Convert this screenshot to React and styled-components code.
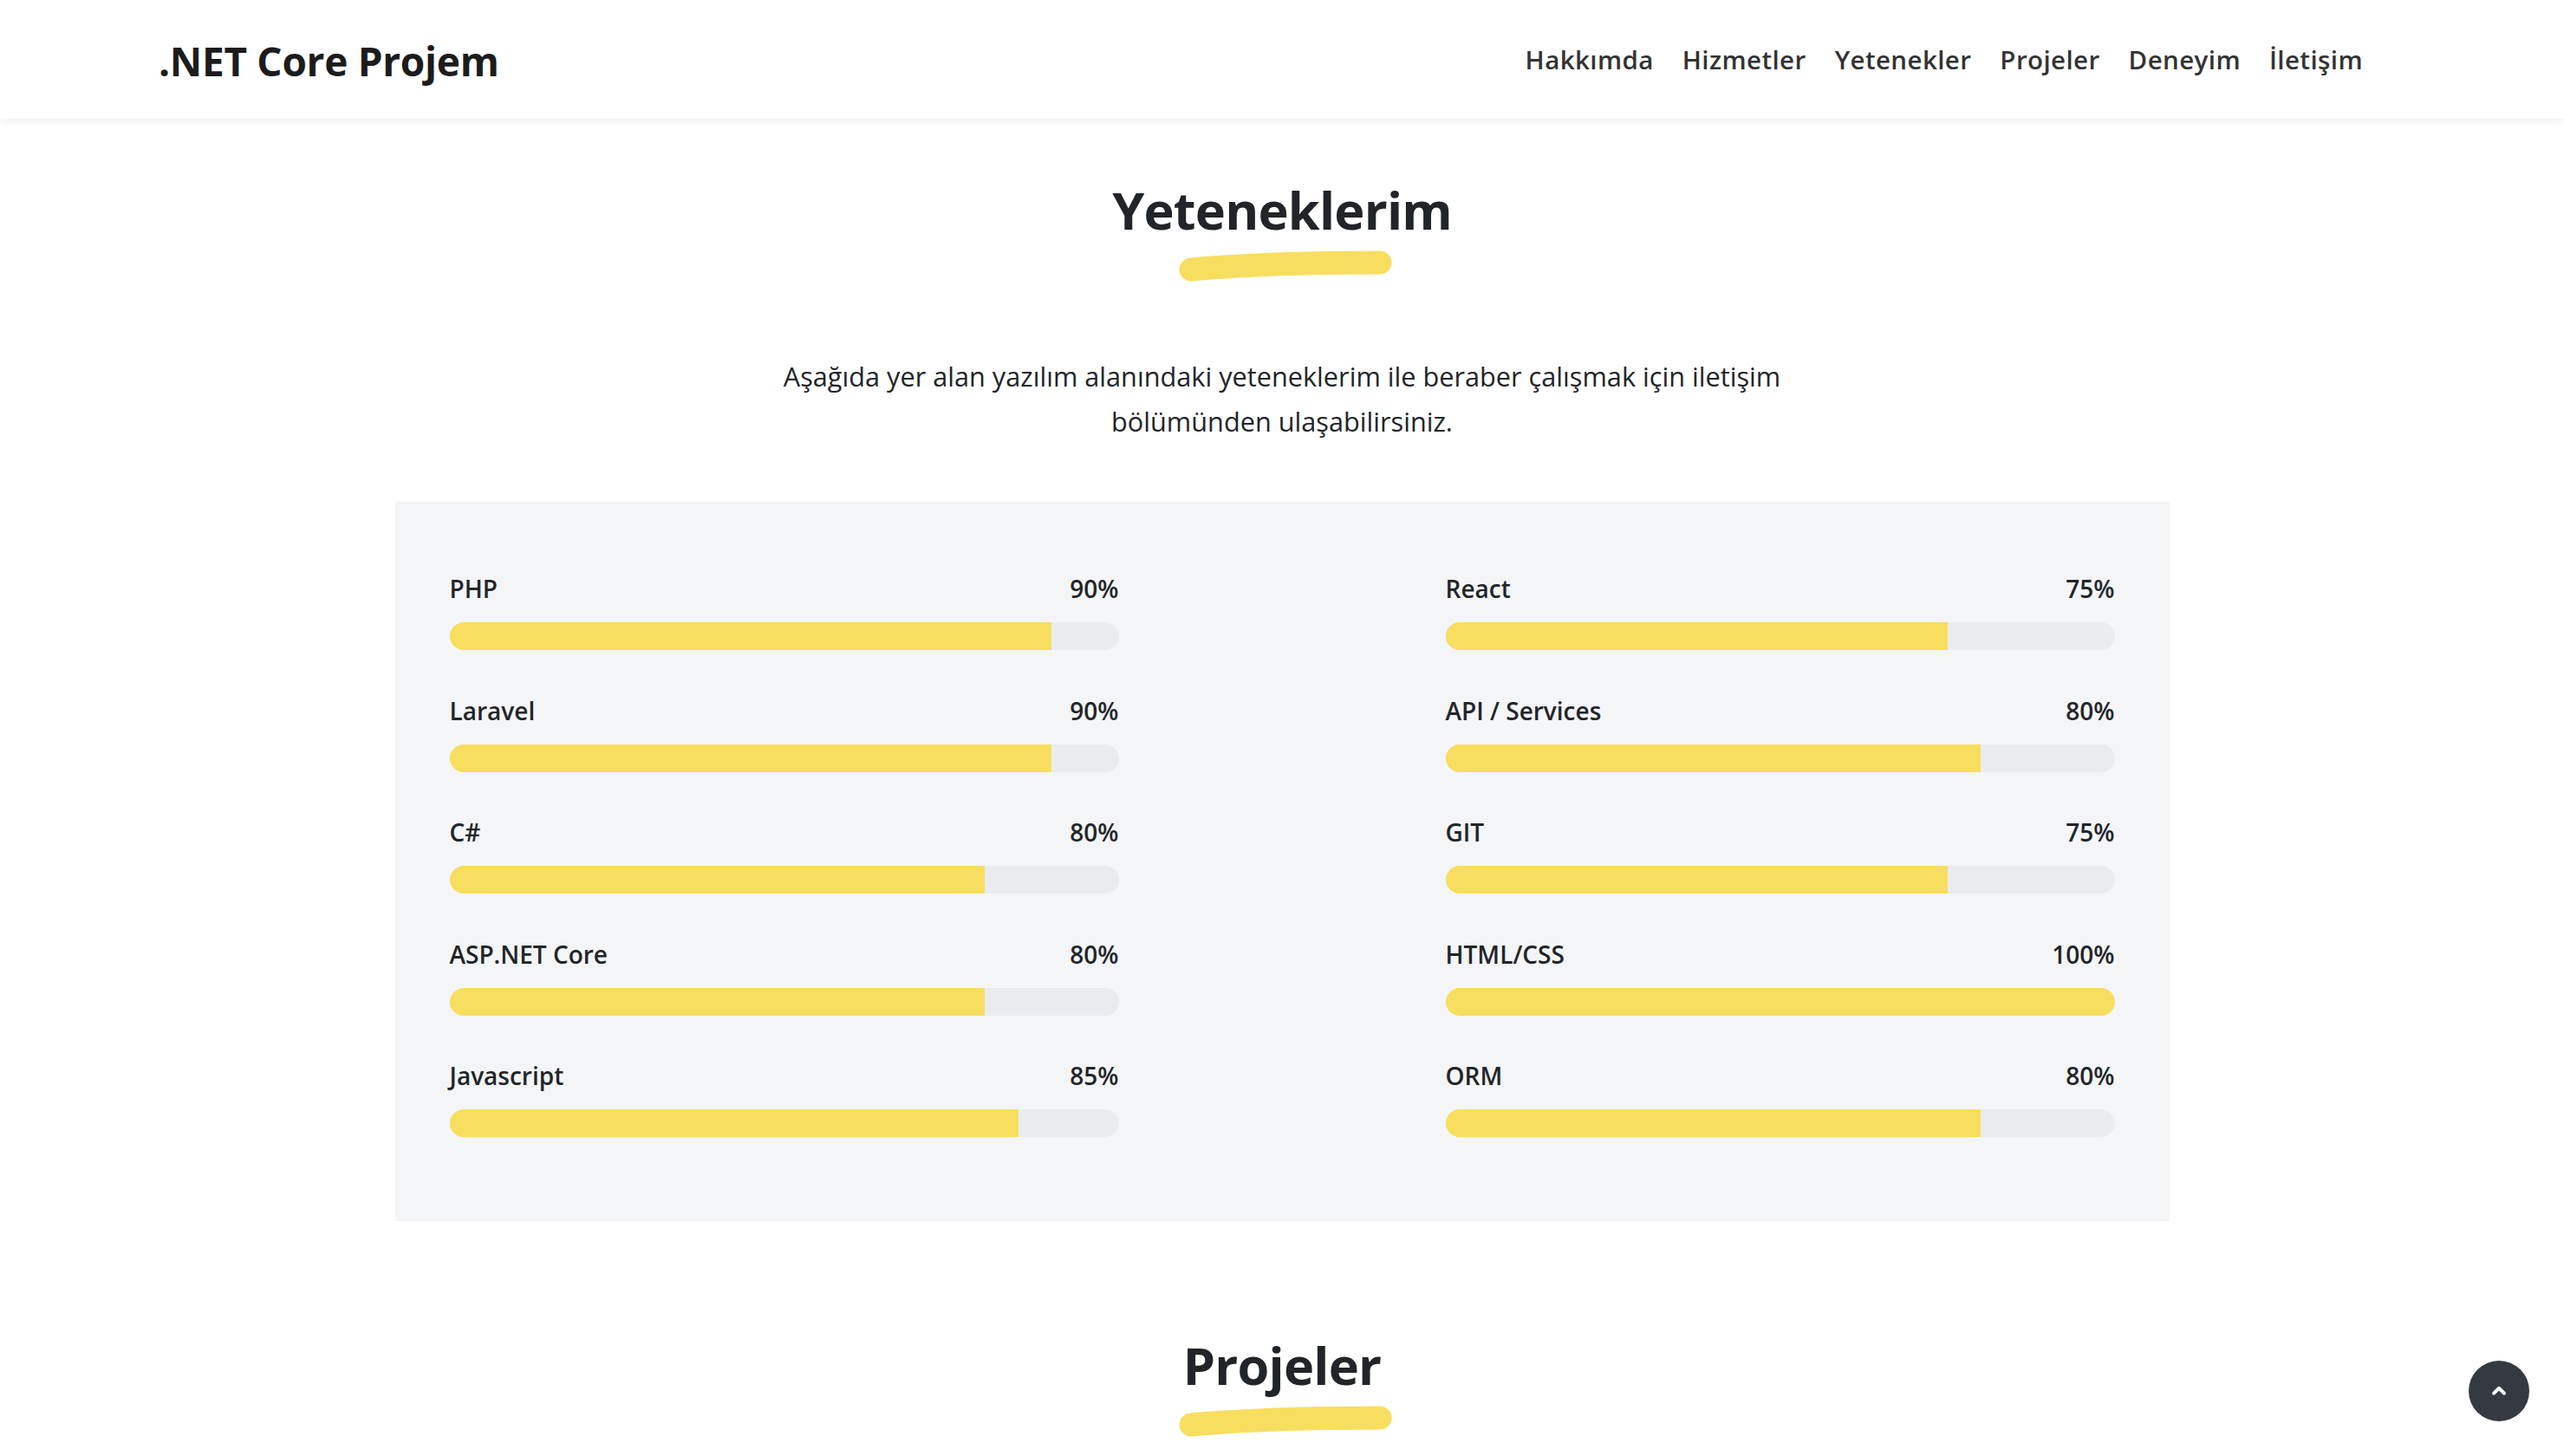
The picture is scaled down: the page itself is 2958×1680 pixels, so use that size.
import React from "react";
import styled, { createGlobalStyle } from "styled-components";

const skillsLeft = [
    { name: "PHP", value: 90 },
    { name: "Laravel", value: 90 },
    { name: "C#", value: 80 },
    { name: "ASP.NET Core", value: 80 },
    { name: "Javascript", value: 85 },
];

const skillsRight = [
    { name: "React", value: 75 },
    { name: "API / Services", value: 80 },
    { name: "GIT", value: 75 },
    { name: "HTML/CSS", value: 100 },
    { name: "ORM", value: 80 },
];

const navLinks = ["Hakkımda", "Hizmetler", "Yetenekler", "Projeler", "Deneyim", "İletişim"];

const Brush = () => (
    <BrushSvg viewBox="0 0 248 36" width="248" height="36">
        <path
            d="M15 22 C 60 18, 120 14, 233 14"
            fill="none"
            stroke="#f7de5f"
            strokeWidth="27"
            strokeLinecap="round"
        />
    </BrushSvg>
);

const SectionTitle = ({ children }) => (
    <TitleBlock>
        <Title>{children}</Title>
        <Brush />
    </TitleBlock>
);

const SkillRow = ({ name, value }) => (
    <Skill>
        <SkillHead>
            <span>{name}</span>
            <span>{value}%</span>
        </SkillHead>
        <Track>
            <Fill style={{ width: `${value}%` }} />
        </Track>
    </Skill>
);

const App = () => {
    return (
        <>
            <GlobalStyle />
            <Header>
                <Logo>.NET Core Projem</Logo>
                <Nav>
                    {navLinks.map((link) => (
                        <NavLink key={link}>{link}</NavLink>
                    ))}
                </Nav>
            </Header>

            <Section>
                <SectionTitle>Yeteneklerim</SectionTitle>
                <Lead>
                    Aşağıda yer alan yazılım alanındaki yeteneklerim ile beraber çalışmak için iletişim
                    bölümünden ulaşabilirsiniz.
                </Lead>
                <SkillsCard>
                    <SkillColumn>
                        {skillsLeft.map((s) => (
                            <SkillRow key={s.name} {...s} />
                        ))}
                    </SkillColumn>
                    <SkillColumn>
                        {skillsRight.map((s) => (
                            <SkillRow key={s.name} {...s} />
                        ))}
                    </SkillColumn>
                </SkillsCard>
            </Section>

            <Section $top="128px">
                <SectionTitle>Projeler</SectionTitle>
            </Section>

            <ToTop aria-label="Yukarı">
                <svg viewBox="0 0 24 24" width="26" height="26">
                    <polyline
                        points="6.5,14.5 12,9 17.5,14.5"
                        fill="none"
                        stroke="#fff"
                        strokeWidth="3.6"
                        strokeLinecap="round"
                        strokeLinejoin="round"
                    />
                </svg>
            </ToTop>
        </>
    );
};

export default App;

const GlobalStyle = createGlobalStyle`
    * {
        box-sizing: border-box;
    }
    html, body {
        margin: 0;
        padding: 0;
        background: #fff;
        overflow: hidden;
    }
    body {
        font-family: "Open Sans", "Noto Sans", sans-serif;
        color: #212529;
    }
`;

const Header = styled.header`
    height: 137px;
    display: flex;
    align-items: center;
    justify-content: space-between;
    padding: 0 232px 0 183px;
    background: #fff;
    box-shadow: 0 2px 10px rgba(0, 0, 0, 0.07);
    position: relative;
    z-index: 2;
`;

const Logo = styled.div`
    font-size: 46px;
    font-weight: 700;
    color: #1c1c1c;
    letter-spacing: -0.3px;
    margin-top: 2px;
`;

const Nav = styled.nav`
    display: flex;
    gap: 33px;
`;

const NavLink = styled.a`
    font-size: 29.5px;
    font-weight: 600;
    letter-spacing: 0.4px;
    color: #333;
    cursor: pointer;
`;

const Section = styled.section`
    display: flex;
    flex-direction: column;
    align-items: center;
    padding-top: ${(p) => p.$top || "67px"};
`;

const TitleBlock = styled.div`
    display: flex;
    flex-direction: column;
    align-items: center;
`;

const Title = styled.h2`
    margin: 0;
    font-size: 59.5px;
    line-height: 76px;
    font-weight: 700;
    letter-spacing: -0.8px;
    color: #212529;
`;

const BrushSvg = styled.svg`
    display: block;
    margin: 9px 0 0 8px;
`;

const Lead = styled.p`
    margin: 83px 0 0;
    max-width: 1220px;
    text-align: center;
    font-size: 30.7px;
    line-height: 52px;
    color: #212529;
`;

const SkillsCard = styled.div`
    width: 2047px;
    margin-top: 67px;
    padding: 78px 63px 97px;
    background: #f4f5f7;
    display: grid;
    grid-template-columns: 1fr 1fr;
    column-gap: 377px;
`;

const SkillColumn = styled.div`
    display: flex;
    flex-direction: column;
    gap: 47.5px;
`;

const Skill = styled.div`
    display: flex;
    flex-direction: column;
    gap: 17px;
`;

const SkillHead = styled.div`
    display: flex;
    justify-content: space-between;
    font-size: 28px;
    line-height: 44px;
    font-weight: 600;
    color: #212529;
`;

const Track = styled.div`
    height: 32px;
    border-radius: 16px;
    background: #e9ecef;
    overflow: hidden;
`;

const Fill = styled.div`
    height: 100%;
    background: #f7de5f;
`;

const ToTop = styled.button`
    position: fixed;
    right: 40px;
    bottom: 40px;
    width: 70px;
    height: 70px;
    border-radius: 50%;
    border: none;
    background: #343a40;
    display: flex;
    align-items: center;
    justify-content: center;
    padding: 0;
    cursor: pointer;
`;
